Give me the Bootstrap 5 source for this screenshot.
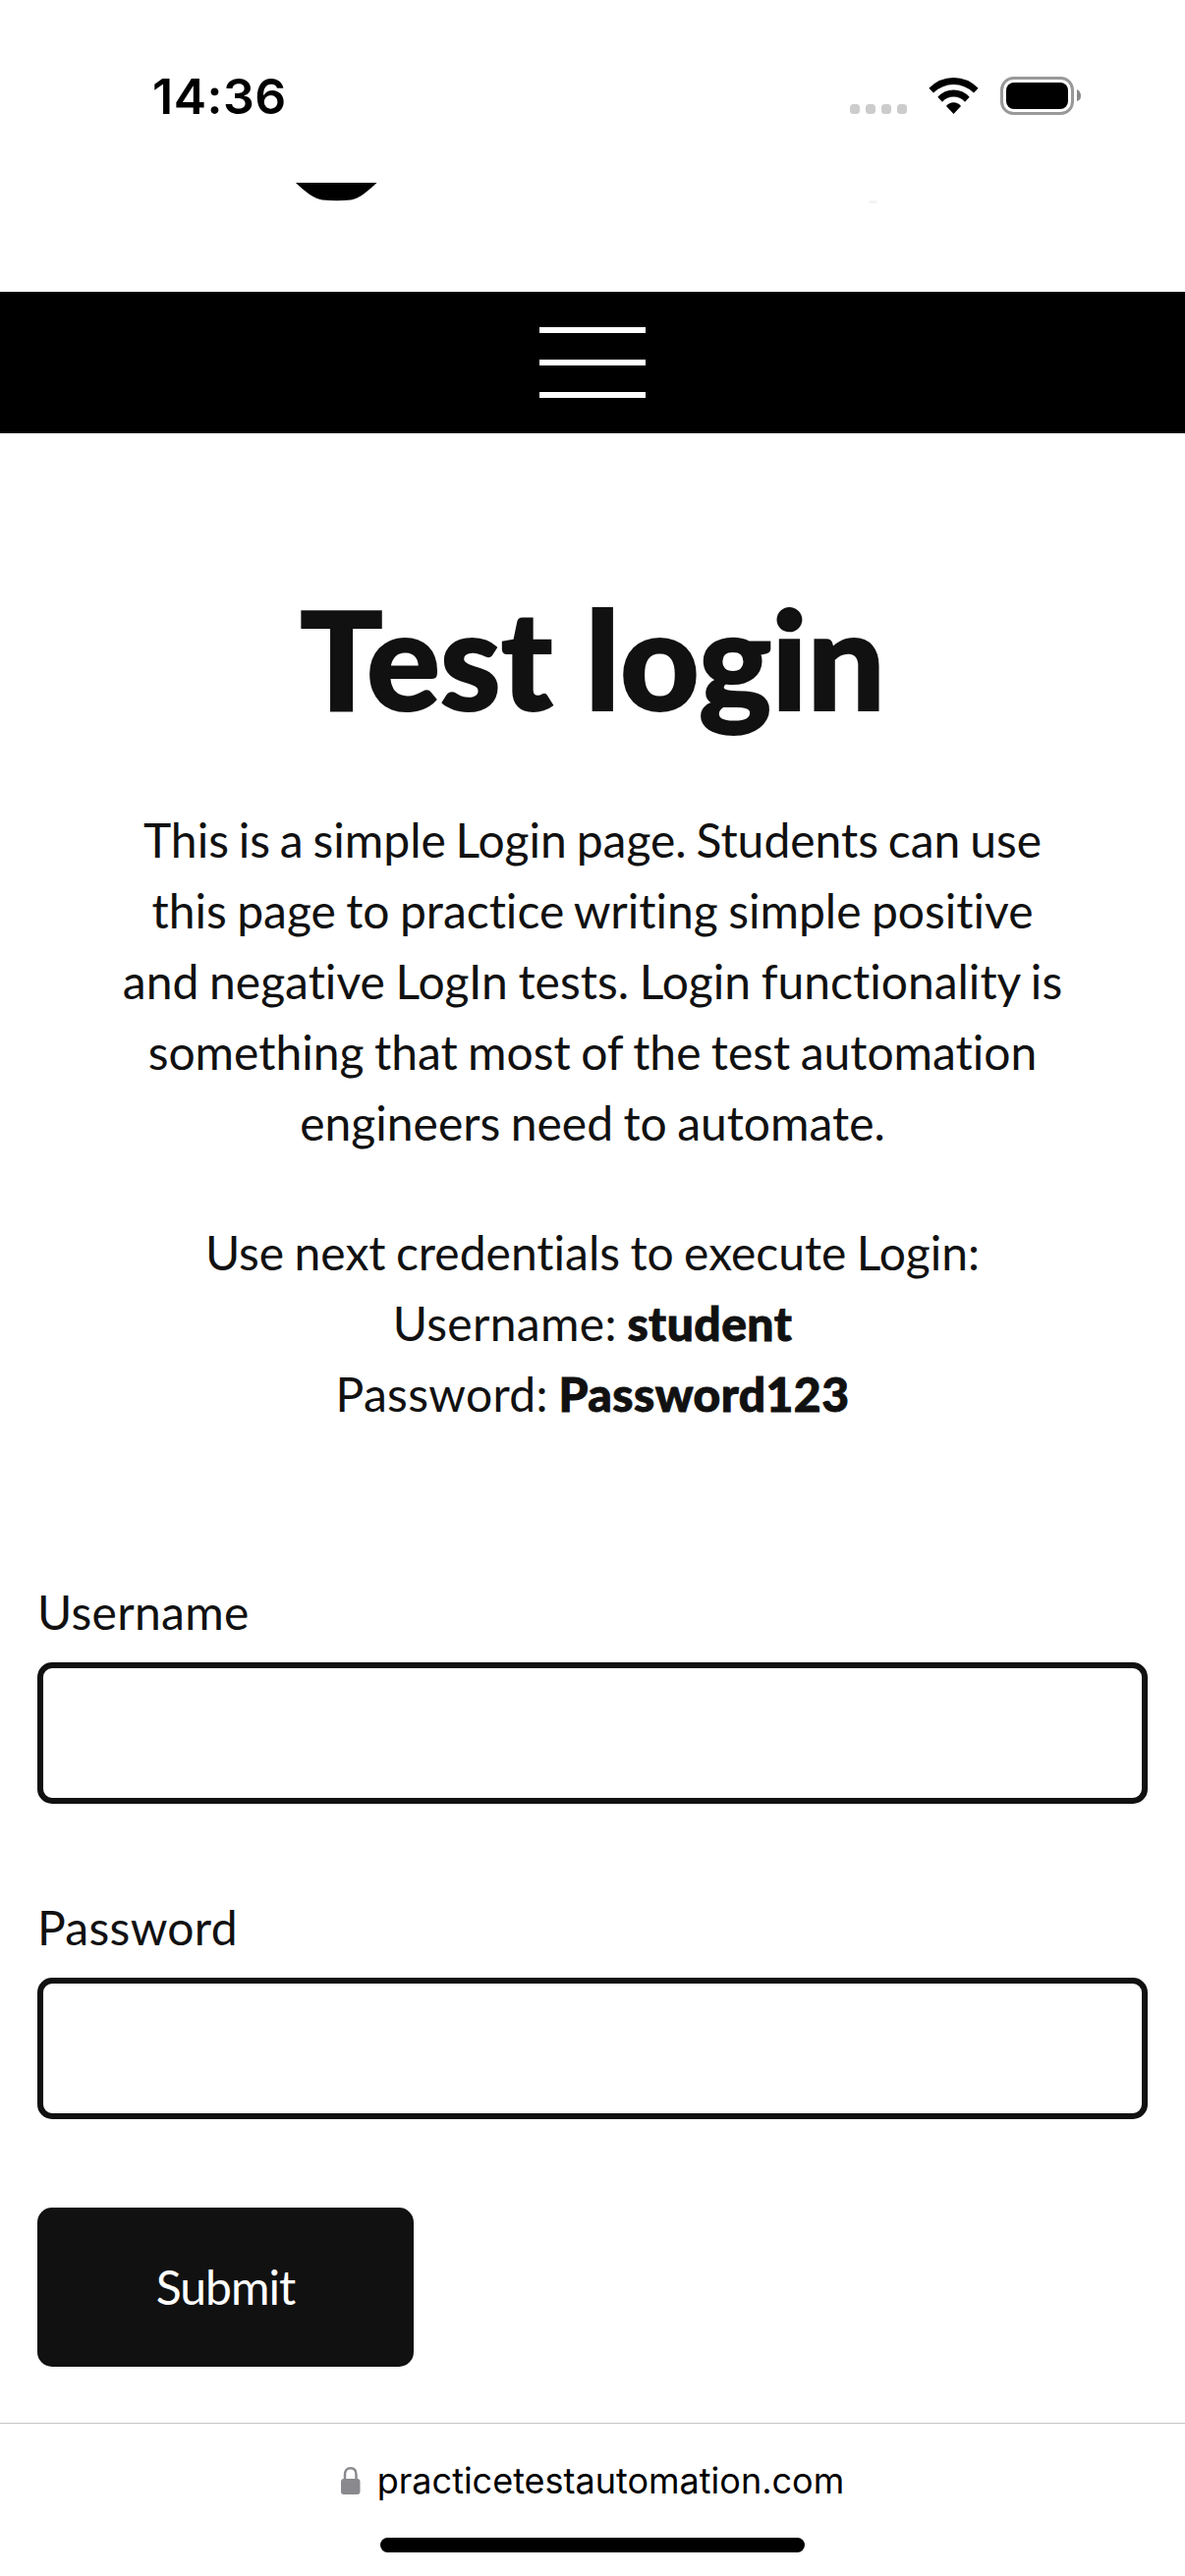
<!DOCTYPE html>
<html lang="en">
<head>
<meta charset="utf-8">
<meta name="viewport" content="width=device-width, initial-scale=1">
<title>Test Login | Practice Test Automation</title>
<link href="https://cdn.jsdelivr.net/npm/bootstrap@5.3.0/dist/css/bootstrap.min.css" rel="stylesheet">
<style>
  body { font-family: Lato, sans-serif; font-size: 48px; line-height: 72px; color: #111; height: 2622px; overflow: hidden; font-variant-ligatures: none; }
  svg { display: block; }
  .status { height: 186px; padding: 70px 105px 0 155px; font-family: Inter, sans-serif; color: #000; }
  .clock { font-size: 50px; font-weight: 600; line-height: 56px; letter-spacing: .5px; }
  .brand { height: 111px; }
  .menubar { height: 144px; background: #000; }
  .burger { gap: 27px; padding: 0; border: 0; border-radius: 0; }
  .burger span { width: 108px; height: 6px; background: #fff; }
  .intro { padding: 151px 75px 0; }
  .title { font-size: 140px; font-weight: 900; line-height: 154px; margin: 0 0 73px; letter-spacing: -.15px; -webkit-text-stroke: 2px #111; }
  .intro p { margin: 0 0 60px; word-spacing: -1.9px; }
  .tight { word-spacing: -2.5px; }
  .loose { word-spacing: -1.6px; }
  .creds { letter-spacing: .3px; }
  .creds strong { font-weight: 900; letter-spacing: .45px; -webkit-text-stroke: .9px #111; }
  .login { padding: 90px 38px 0; }
  .login .form-label { margin: 0 0 15px; letter-spacing: .3px; }
  .login .form-control { height: 144px; border: 6px solid #111; border-radius: 15px; margin-bottom: 90px; }
  .login .btn { width: 383px; height: 162px; border-radius: 15px; border: 0; background: #111; color: #fff; font-size: 48px; line-height: 72px; letter-spacing: -1px; }
  .urlbar { height: 156px; border-top: 1px solid #c4c4c6; font-family: Inter, sans-serif; color: #000; }
  .address { padding-top: 33px; gap: 17px; font-size: 36px; line-height: 50px; }
  .homebar { width: 432px; height: 15px; border-radius: 8px; background: #000; margin-top: 33px; }
</style>
</head>
<body class="bg-white d-flex flex-column">
<header>
  <div class="status d-flex justify-content-between align-items-start">
    <span class="clock">14:36</span>
    <svg width="236" height="56" viewBox="0 0 236 56">
      <g fill="#ccc"><rect y="36" width="10" height="10" rx="3.5"/><rect x="16" y="36" width="10" height="10" rx="3.5"/><rect x="32" y="36" width="10" height="10" rx="3.5"/><rect x="48" y="36" width="10" height="10" rx="3.5"/></g>
      <path d="M80.400 19.800Q91 9 105.500 9T130.600 19.800L126 24.500Q117 16 105.500 16T85 24.500ZM89.300 28.800Q96 21.500 105.500 21.500T121.700 28.800L117 33.700Q112 28.600 105.500 28.600T94 33.700ZM98 38Q101 34.300 105.500 34.300T113 38L105.500 46Z"/>
      <rect x="154.500" y="9.500" width="72" height="36" rx="12" fill="none" stroke="#999" stroke-width="3"/>
      <rect x="159" y="14" width="63" height="27" rx="8"/>
      <path d="M231 21Q235 23 235 27.500T231 33Z" fill="#888"/>
    </svg>
  </div>
  <div class="brand">
    <svg width="1206" height="24" viewBox="0 0 1206 24">
      <path d="M301 0H383.500C375 8 365 16.500 357 17.500Q343 19 328 17.500C320 16.500 309 8 301 0Z"/>
      <ellipse cx="888.500" cy="19.500" rx="4.500" ry="1.500" fill="#f3f3f3"/>
    </svg>
  </div>
</header>
<nav class="menubar d-flex justify-content-center align-items-center">
  <button class="btn burger d-flex flex-column" type="button" aria-label="Menu"><span></span><span></span><span></span></button>
</nav>
<main class="flex-grow-1">
  <section class="intro text-center">
    <h1 class="title">Test login</h1>
    <p><span class="tight">This is a simple Login page. Students can use</span><br>this page to practice writing simple positive<br><span class="loose">and negative LogIn tests. Login functionality is</span><br>something that most of the test automation<br>engineers need to automate.</p>
    <p>Use next credentials to execute Login:<br><span class="creds">Username: <strong>student</strong></span><br><span class="creds">Password: <strong>Password123</strong></span></p>
  </section>
  <form class="login">
    <label class="form-label d-block" for="user">Username</label>
    <input class="form-control" id="user" type="text">
    <label class="form-label d-block" for="pass">Password</label>
    <input class="form-control" id="pass" type="password">
    <button class="btn" type="button">Submit</button>
  </form>
</main>
<footer class="urlbar d-flex flex-column align-items-center flex-shrink-0">
  <div class="address d-flex align-items-center">
    <svg width="20" height="28" viewBox="0 0 20 28"><rect y="12" width="19.500" height="16" rx="3" fill="#8a8a8e"/><path d="M4 13V8Q4 1.300 9.750 1.300T15.500 8V13" fill="none" stroke="#8a8a8e" stroke-width="2.500"/></svg>
    <span>practicetestautomation.com</span>
  </div>
  <div class="homebar"></div>
</footer>
<script src="https://cdn.jsdelivr.net/npm/bootstrap@5.3.0/dist/js/bootstrap.bundle.min.js"></script>
</body>
</html>
